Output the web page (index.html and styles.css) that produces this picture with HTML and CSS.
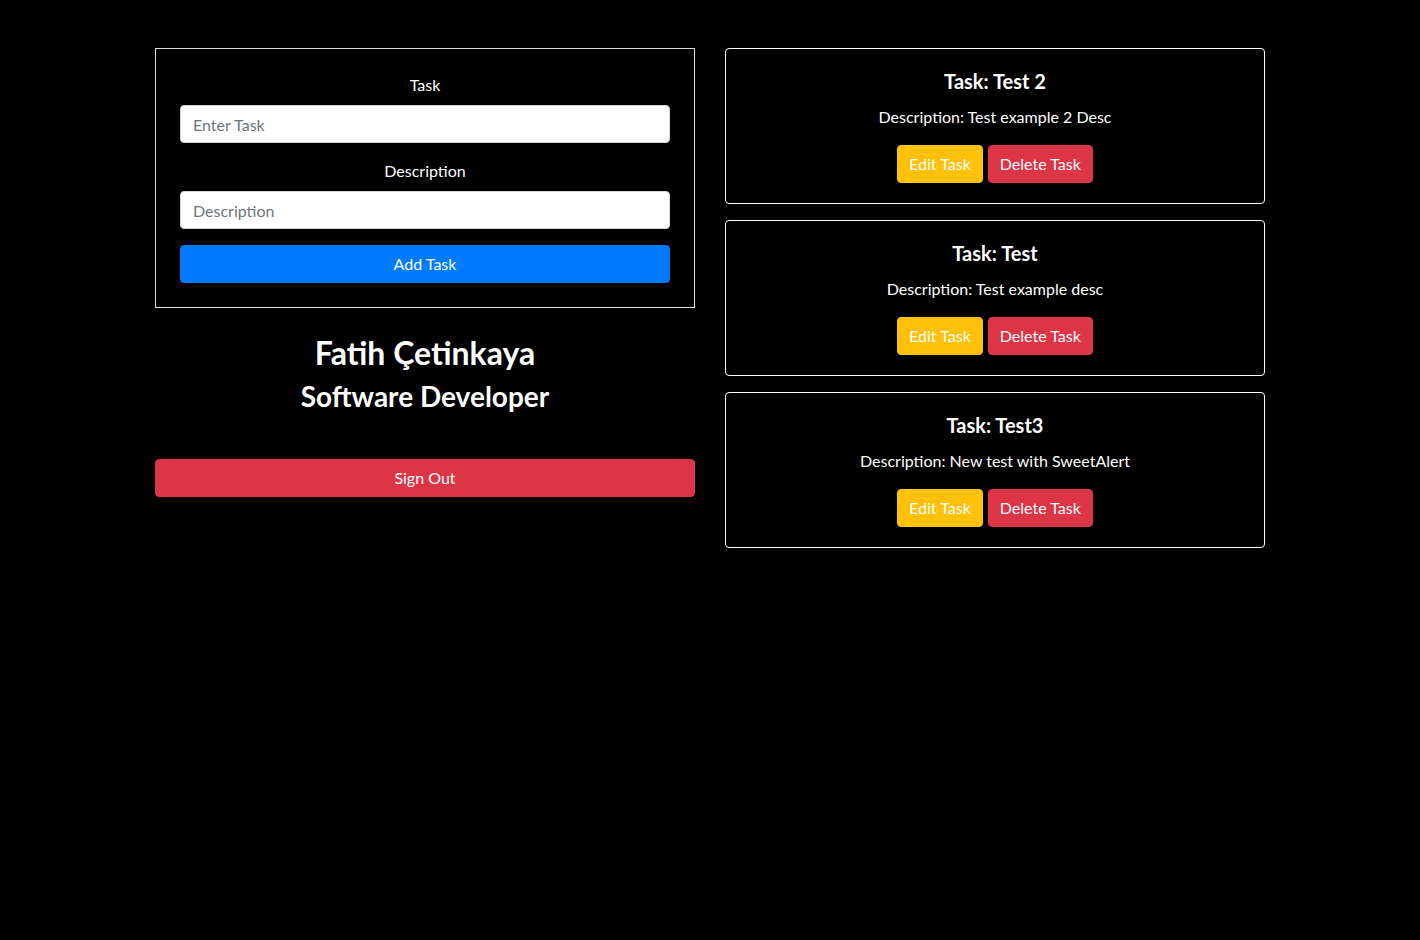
FILE: index.html
```html
<!DOCTYPE html>
<html lang="tr">
<head>
<meta charset="utf-8">
<title>Tasks</title>
<link rel="stylesheet" href="styles.css">
</head>
<body>
<div class="container">
  <div class="col">
    <form class="form-card">
      <label class="label" for="task">Task</label>
      <input class="input" id="task" type="text" placeholder="Enter Task">
      <label class="label" for="desc">Description</label>
      <input class="input" id="desc" type="text" placeholder="Description">
      <button type="button" class="btn btn-primary btn-block">Add Task</button>
    </form>
    <div class="profile">
      <h2 class="name">Fatih Çetinkaya</h2>
      <h3 class="role">Software Developer</h3>
    </div>
    <button type="button" class="btn btn-danger btn-block signout">Sign Out</button>
  </div>
  <div class="col tasks">
    <div class="task-card">
      <h5 class="task-title">Task: Test 2</h5>
      <p class="task-desc">Description: Test example 2 Desc</p>
      <div class="actions">
        <button type="button" class="btn btn-warning">Edit Task</button>
        <button type="button" class="btn btn-danger">Delete Task</button>
      </div>
    </div>
    <div class="task-card">
      <h5 class="task-title">Task: Test</h5>
      <p class="task-desc">Description: Test example desc</p>
      <div class="actions">
        <button type="button" class="btn btn-warning">Edit Task</button>
        <button type="button" class="btn btn-danger">Delete Task</button>
      </div>
    </div>
    <div class="task-card">
      <h5 class="task-title">Task: Test3</h5>
      <p class="task-desc">Description: New test with SweetAlert</p>
      <div class="actions">
        <button type="button" class="btn btn-warning">Edit Task</button>
        <button type="button" class="btn btn-danger">Delete Task</button>
      </div>
    </div>
  </div>
</div>
</body>
</html>
```
FILE: styles.css
```css
* { box-sizing: border-box; }
html, body { margin: 0; padding: 0; }
body {
  background: #000;
  color: #fff;
  font-family: Lato, "Open Sans", sans-serif;
  font-size: 16px;
  line-height: 24px;
}
.container {
  width: 1110px;
  margin: 48px auto 0;
  display: flex;
  gap: 30px;
  align-items: flex-start;
}
.col { width: 540px; flex: 0 0 540px; }
.form-card {
  border: 1px solid #dedede;
  padding: 24px;
  display: flex;
  flex-direction: column;
  margin: 0;
}
.label {
  display: block;
  text-align: center;
  margin-bottom: 8px;
}
.input {
  display: block;
  width: 100%;
  height: 38px;
  padding: 6px 12px;
  font-family: inherit;
  font-size: 16px;
  color: #495057;
  background: #fff;
  border: 1px solid #ced4da;
  border-radius: 4px;
  margin: 0 0 16px;
}
.input::placeholder { color: #6c757d; opacity: 1; }
.btn {
  display: inline-block;
  height: 38px;
  padding: 6px 12px;
  font-family: inherit;
  font-size: 16px;
  line-height: 24px;
  border: 1px solid transparent;
  border-radius: 4px;
  color: #fff;
  cursor: pointer;
}
.btn-block { display: block; width: 100%; }
.btn-primary { background: #007bff; border-color: #007bff; }
.btn-danger { background: #dc3545; border-color: #dc3545; }
.btn-warning { background: #ffc107; border-color: #ffc107; color: #fff; }
.profile { text-align: center; margin-top: 26px; }
.name {
  font-size: 32px;
  line-height: 38px;
  font-weight: 700;
  margin: 0 0 7px;
}
.role {
  font-size: 28px;
  line-height: 34px;
  font-weight: 700;
  margin: 0;
}
.signout { margin-top: 46px; }
.tasks { display: flex; flex-direction: column; gap: 16px; }
.task-card {
  border: 1px solid #fff;
  border-radius: 4px;
  padding: 20px;
  text-align: center;
}
.task-title {
  font-size: 20px;
  line-height: 25px;
  font-weight: 700;
  margin: 0 0 11px;
}
.task-desc { margin: 0 0 16px; }
.actions { display: flex; justify-content: center; gap: 5px; }
.actions .btn { padding: 6px 11px; }
```
